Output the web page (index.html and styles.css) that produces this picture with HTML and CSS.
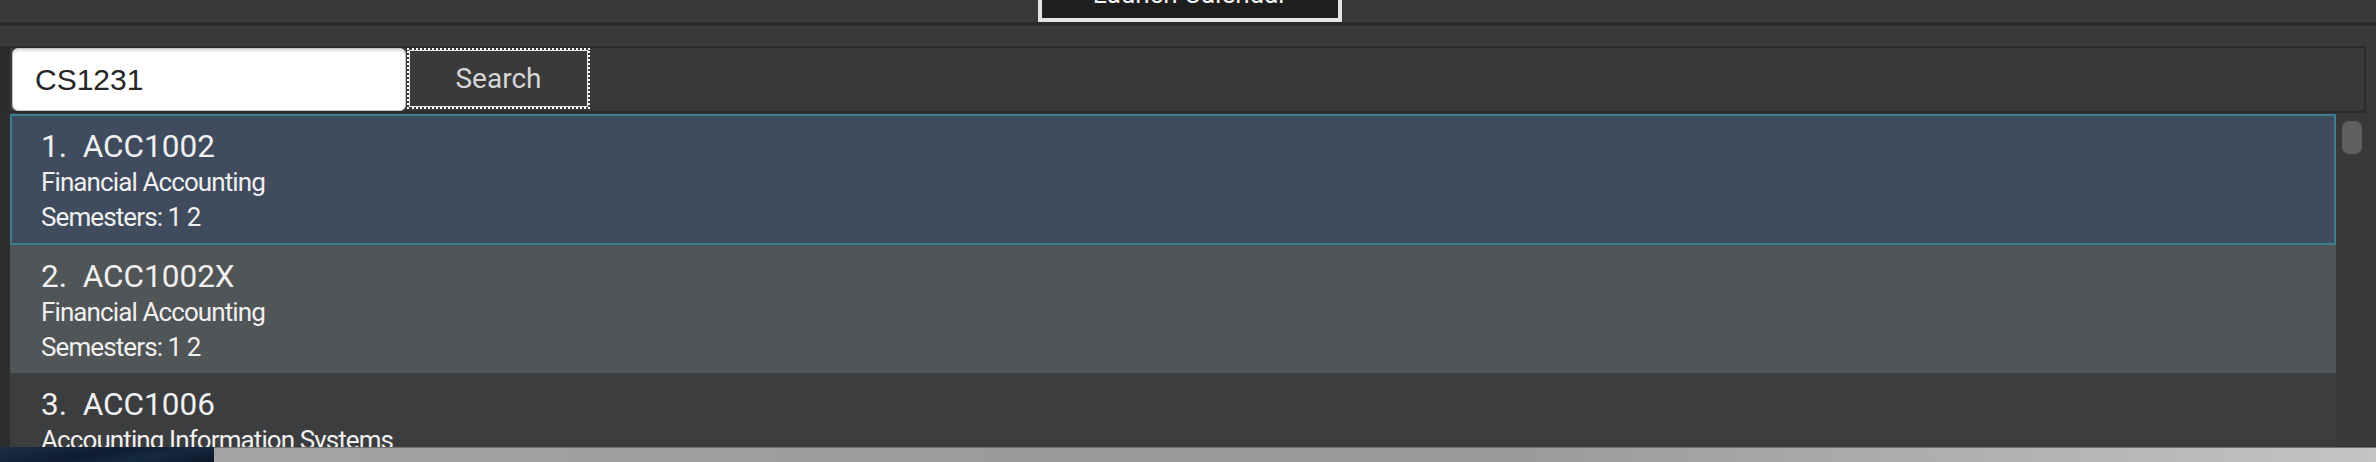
FILE: index.html
```html
<!DOCTYPE html>
<html lang="en">
<head>
<meta charset="utf-8">
<title>Module Planner</title>
<link rel="stylesheet" href="styles.css">
</head>
<body>
<div class="app">
  <header class="topbar">
    <div class="launch">Launch Calendar</div>
  </header>
  <div class="divider"></div>
  <div class="spacer"></div>
  <div class="search-row">
    <div class="field">CS1231</div>
    <button class="search-btn" type="button">Search</button>
  </div>
  <div class="main">
    <div class="gutter"></div>
    <ul class="list">
      <li class="cell selected">
        <div class="title">1.&nbsp; ACC1002</div>
        <div class="sub">Financial Accounting</div>
        <div class="sub">Semesters: 1 2</div>
      </li>
      <li class="cell alt">
        <div class="title">2.&nbsp; ACC1002X</div>
        <div class="sub">Financial Accounting</div>
        <div class="sub">Semesters: 1 2</div>
      </li>
      <li class="cell">
        <div class="title">3.&nbsp; ACC1006</div>
        <div class="sub">Accounting Information Systems</div>
        <div class="sub">Semesters: 1</div>
      </li>
    </ul>
    <div class="scroll"><div class="thumb"></div></div>
  </div>
  <div class="desktop">
    <div class="ocean"></div>
    <div class="shelf"></div>
  </div>
</div>
</body>
</html>
```
FILE: styles.css
```css
html, body {
  margin: 0;
  padding: 0;
}
body {
  width: 2376px;
  height: 462px;
  overflow: hidden;
  background: #393939;
  font-family: Roboto, "Liberation Sans", sans-serif;
}
.app {
  display: flex;
  flex-direction: column;
  height: 462px;
}
.topbar {
  height: 22px;
  flex: none;
  background: #393939;
  display: flex;
  justify-content: center;
  align-items: flex-end;
  overflow: hidden;
}
.launch {
  flex: none;
  width: 296px;
  margin-left: 4px;
  border: 4px solid #e4e4e4;
  background: #1e1e1e;
  color: #f4f4f4;
  font-size: 26px;
  line-height: 30px;
  text-align: center;
  padding: 20px 0 9px;
}
.divider {
  height: 4px;
  flex: none;
  background: #2b2b2b;
}
.spacer {
  height: 20px;
  flex: none;
  background: #393939;
}
.search-row {
  flex: none;
  height: 63px;
  display: flex;
  align-items: flex-start;
  margin-right: 10px;
  border-style: solid;
  border-color: #2b2b2b;
  border-width: 2px 2px 2px 10px;
  padding-left: 2px;
  background: #393939;
}
.field {
  box-sizing: border-box;
  width: 394px;
  height: 63px;
  background: #ffffff;
  border: 1px solid #c4c4c4;
  border-radius: 6px;
  box-shadow: inset 0 2px 2px rgba(0, 0, 0, 0.12);
  padding-left: 22px;
  font-family: "Liberation Sans", Arial, sans-serif;
  font-size: 30px;
  line-height: 61px;
  color: #262626;
}
.search-btn {
  margin: 0 0 0 1px;
  width: 183px;
  height: 61px;
  box-sizing: border-box;
  background: #3a3a3a;
  border: 2px dotted #ffffff;
  box-shadow: inset 0 0 0 1px #e6e6e6;
  color: #d6d6d6;
  font-family: Roboto, "Liberation Sans", sans-serif;
  font-size: 28px;
  padding: 0;
  cursor: pointer;
}
.main {
  flex: 1;
  display: flex;
  min-height: 0;
}
.gutter {
  width: 10px;
  flex: none;
  background: #2d2d2d;
}
.list {
  list-style: none;
  margin: 1px 0 0;
  padding: 0;
  width: 2326px;
  flex: none;
  overflow: hidden;
  background: #3c3d3f;
}
.cell {
  height: 128px;
  box-sizing: border-box;
  padding: 14px 0 0 31px;
  background: #3c3d3f;
  color: #f0f0f0;
}
.cell.alt {
  background: #505557;
}
.cell.selected {
  height: 131px;
  border: 2px solid #3b7c92;
  padding: 13px 0 0 29px;
  background: #404c5e;
}
.title {
  font-size: 31.5px;
  line-height: 36px;
  white-space: nowrap;
}
.sub {
  font-size: 26px;
  line-height: 35px;
  letter-spacing: -0.9px;
  white-space: nowrap;
}
.scroll {
  flex: 1;
  background: #383838;
  padding: 8px 0 0 6px;
}
.thumb {
  width: 20px;
  height: 33px;
  border-radius: 7px;
  background: #5f5f5f;
}
.desktop {
  height: 15px;
  flex: none;
  display: flex;
}
.ocean {
  width: 214px;
  flex: none;
  background: linear-gradient(170deg, #1c2f44 0%, #0f1e30 45%, #152a40 70%, #0b1626 100%);
}
.shelf {
  flex: 1;
  border-top: 1px solid #707070;
  background: linear-gradient(90deg, #a4a4a4 0%, #999999 45%, #9a9a9a 60%, #b4b4b4 85%, #c4c4c4 100%);
}
```
